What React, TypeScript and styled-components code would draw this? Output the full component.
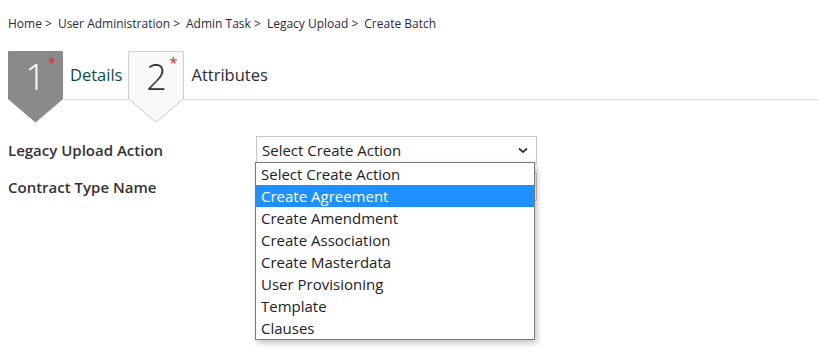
import styled, { createGlobalStyle } from 'styled-components';

const GlobalStyle = createGlobalStyle`
  html, body, #root {
    height: 100%;
  }
  body {
    margin: 0;
    background: #fff;
    font-family: "Open Sans", "Noto Sans", sans-serif;
    color: #333;
  }
`;

const Page = styled.div`
  min-height: 100%;
  box-sizing: border-box;
  padding: 0 0 0 8px;
`;

const Breadcrumb = styled.nav`
  display: flex;
  padding-top: 15px;
  font-size: 12px;
  line-height: 17px;
  color: #2a2a3a;
`;

const Crumb = styled.span`
  margin-right: 6px;
`;

const StepBar = styled.div`
  display: flex;
  align-items: flex-start;
  margin-top: 19px;
  height: 48px;
  border-bottom: 1px solid #dcdcdc;
`;

const Step = styled.div`
  display: flex;
  align-items: flex-start;
`;

const Badge = styled.div<{ $active: boolean }>`
  position: relative;
  width: ${({ $active }) => ($active ? 55 : 56)}px;
  height: 71px;
  margin-left: ${({ $active }) => ($active ? 0 : 6)}px;
  display: flex;
  justify-content: center;
  color: ${({ $active }) => ($active ? '#fff' : '#333')};
  z-index: 1;

  svg {
    position: absolute;
    inset: 0;
  }
`;

const Num = styled.span`
  position: relative;
  font-size: 36px;
  font-weight: 300;
  line-height: 1;
  margin-top: 8px;
`;

const Star = styled.span`
  position: absolute;
  top: 1px;
  right: 7px;
  color: #e8202a;
  font-size: 15px;
`;

const StepLabel = styled.span<{ $active: boolean }>`
  margin: 12px 0 0 7px;
  font-size: 16.5px;
  color: ${({ $active }) => ($active ? '#0d4b4b' : '#2b2b38')};
`;

const Form = styled.div`
  position: relative;
  display: grid;
  grid-template-columns: 248px 281px;
  row-gap: 9px;
  margin-top: 36px;
  align-items: center;
`;

const Label = styled.label`
  font-size: 15px;
  font-weight: 600;
  color: #333;
`;

const SelectBox = styled.div`
  position: relative;
  height: 28px;
  box-sizing: border-box;
  border: 1px solid #c8c8c8;
  padding-left: 5px;
  display: flex;
  align-items: center;
  font-size: 15px;
  color: #222;

  svg {
    position: absolute;
    right: 8px;
    top: 10px;
  }
`;

const List = styled.ul`
  position: absolute;
  left: 247px;
  top: 26px;
  width: 278px;
  margin: 0;
  padding: 0;
  list-style: none;
  background: #fff;
  border: 1px solid #7a7a7a;
  box-shadow: 2px 3px 6px rgba(0, 0, 0, 0.25);
  z-index: 2;
`;

const Option = styled.li<{ $selected?: boolean }>`
  height: 22px;
  line-height: 22px;
  padding-left: 5px;
  font-size: 15px;
  background: ${({ $selected }) => ($selected ? '#1e90ff' : 'transparent')};
  color: ${({ $selected }) => ($selected ? '#fff' : '#222')};
`;

const crumbs = ['Home', 'User Administration', 'Admin Task', 'Legacy Upload'];
const options = [
  'Select Create Action',
  'Create Agreement',
  'Create Amendment',
  'Create Association',
  'Create Masterdata',
  'User Provisioning',
  'Template',
  'Clauses',
];

function Shape({ active }: { active: boolean }) {
  const w = active ? 55 : 56;
  return (
    <svg width={w} height={72} viewBox={`0 0 ${w} 72`}>
      <polygon
        points={`0.5,0.5 ${w - 0.5},0.5 ${w - 0.5},48 ${w / 2},71 0.5,48`}
        fill={active ? '#8a8a8a' : '#f9f9f9'}
        stroke={active ? '#8a8a8a' : '#cfcfcf'}
      />
    </svg>
  );
}

function Chevron() {
  return (
    <svg width="10" height="7" viewBox="0 0 10 7">
      <path d="M1 1.5 L5 5 L9 1.5" fill="none" stroke="#333" strokeWidth="1.8" />
    </svg>
  );
}

export default function App() {
  return (
    <Page>
      <GlobalStyle />
      <Breadcrumb>
        {crumbs.map((c) => (
          <Crumb key={c}>{c} &gt; </Crumb>
        ))}
        <Crumb>Create Batch</Crumb>
      </Breadcrumb>

      <StepBar>
        <Step>
          <Badge $active>
            <Shape active />
            <Num>1</Num>
            <Star>*</Star>
          </Badge>
          <StepLabel $active>Details</StepLabel>
        </Step>
        <Step>
          <Badge $active={false}>
            <Shape active={false} />
            <Num>2</Num>
            <Star>*</Star>
          </Badge>
          <StepLabel $active={false}>Attributes</StepLabel>
        </Step>
      </StepBar>

      <Form>
        <Label>Legacy Upload Action</Label>
        <SelectBox>
          Select Create Action
          <Chevron />
        </SelectBox>
        <Label>Contract Type Name</Label>
        <SelectBox />
        <List>
          {options.map((o, i) => (
            <Option key={o} $selected={i === 1}>
              {o}
            </Option>
          ))}
        </List>
      </Form>
    </Page>
  );
}
